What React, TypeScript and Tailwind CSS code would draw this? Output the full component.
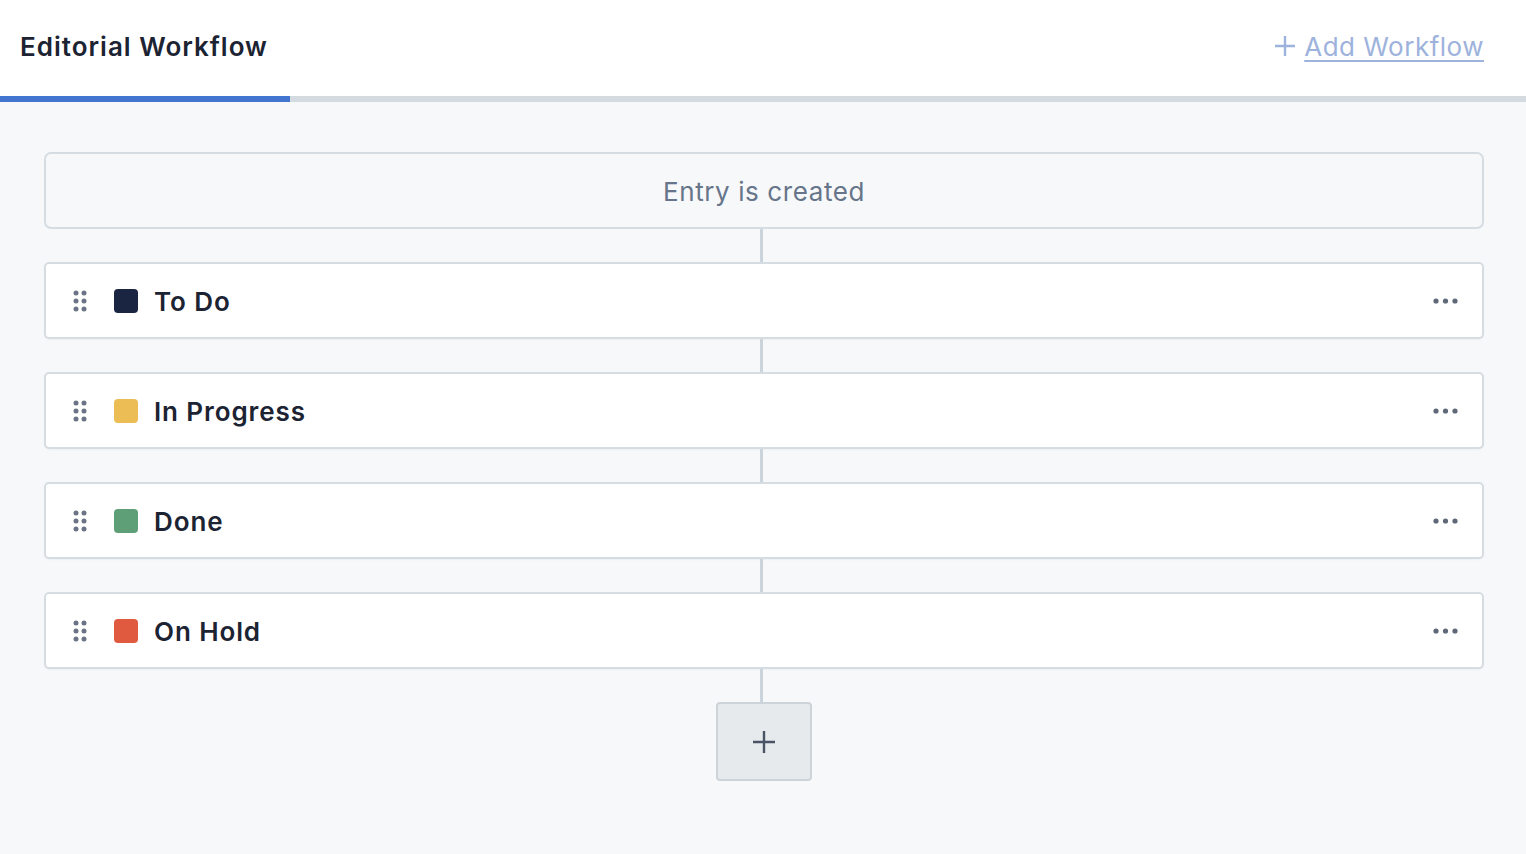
import React from 'react';

const states = [
    { name: 'To Do', color: 'bg-[#1a2541]' },
    { name: 'In Progress', color: 'bg-[#edbd55]' },
    { name: 'Done', color: 'bg-[#5f9f77]' },
    { name: 'On Hold', color: 'bg-[#df5a3f]' },
];

const DragHandle = () => (
    <svg width="16" height="22" viewBox="0 0 16 22" className="fill-[#6b7486]">
        <circle cx="3" cy="3" r="2.5" />
        <circle cx="11" cy="3" r="2.5" />
        <circle cx="3" cy="11" r="2.5" />
        <circle cx="11" cy="11" r="2.5" />
        <circle cx="3" cy="19" r="2.5" />
        <circle cx="11" cy="19" r="2.5" />
    </svg>
);

const MoreDots = () => (
    <svg width="26" height="6" viewBox="0 0 26 6" className="fill-[#5f6878]">
        <circle cx="3" cy="3" r="2.6" />
        <circle cx="12.5" cy="3" r="2.6" />
        <circle cx="22" cy="3" r="2.6" />
    </svg>
);

const Connector = () => <div className="w-[3px] h-[33px] mr-[5px] bg-[#cbd4da] shrink-0" />;

export default function App() {
    return (
        <div className="min-h-[854px] bg-[#f7f8fa] font-['Inter',sans-serif]">
            {/* header */}
            <div className="h-[96px] bg-white flex items-center justify-between pl-[20px] pr-[42px]">
                <h1 className="text-[26px] font-semibold text-[#1c2332] tracking-[1px] pb-[4px]">Editorial Workflow</h1>
                <a className="flex items-center gap-[8px] text-[26px] text-[#9db2dc] tracking-[0.5px] cursor-pointer pb-[4px]">
                    <svg width="22" height="22" viewBox="0 0 22 22" className="stroke-[#9db2dc]" strokeWidth="2.4" fill="none">
                        <path d="M11 1v20M1 11h20" />
                    </svg>
                    <span className="underline underline-offset-[4px] decoration-[2px]">Add Workflow</span>
                </a>
            </div>
            <div className="h-[6px] flex">
                <div className="w-[290px] bg-[#4275cf]" />
                <div className="flex-1 bg-[#d3dae0]" />
            </div>

            {/* workflow */}
            <div className="pl-[44px] pr-[42px] pt-[50px] flex flex-col items-center">
                <div className="w-full h-[77px] rounded-[7px] border-2 border-[#d6dde2] flex items-center justify-center">
                    <span className="text-[26px] text-[#66758a] tracking-[0.6px] pt-[2px]">Entry is created</span>
                </div>
                {states.map((s) => (
                    <React.Fragment key={s.name}>
                        <Connector />
                        <div className="w-full h-[77px] rounded-[5px] border-2 border-[#d6dde2] bg-white shadow-[0_1px_2px_rgba(0,0,0,0.04)] flex items-center pl-[27px] pr-[23px]">
                            <DragHandle />
                            <div className={`w-[24px] h-[24px] rounded-[4px] ml-[25px] ${s.color}`} />
                            <span className="ml-[16px] pt-[2px] text-[26px] font-semibold text-[#1c2332] tracking-[0.9px]">{s.name}</span>
                            <div className="ml-auto flex items-center">
                                <MoreDots />
                            </div>
                        </div>
                    </React.Fragment>
                ))}
                <Connector />
                <button className="w-[96px] h-[79px] rounded-[4px] border-2 border-[#ccd4da] bg-[#e6eaed] flex items-center justify-center">
                    <svg width="24" height="24" viewBox="0 0 24 24" className="stroke-[#4a5466]" strokeWidth="2.4" fill="none">
                        <path d="M12 1v22M1 12h22" />
                    </svg>
                </button>
            </div>
        </div>
    );
}
